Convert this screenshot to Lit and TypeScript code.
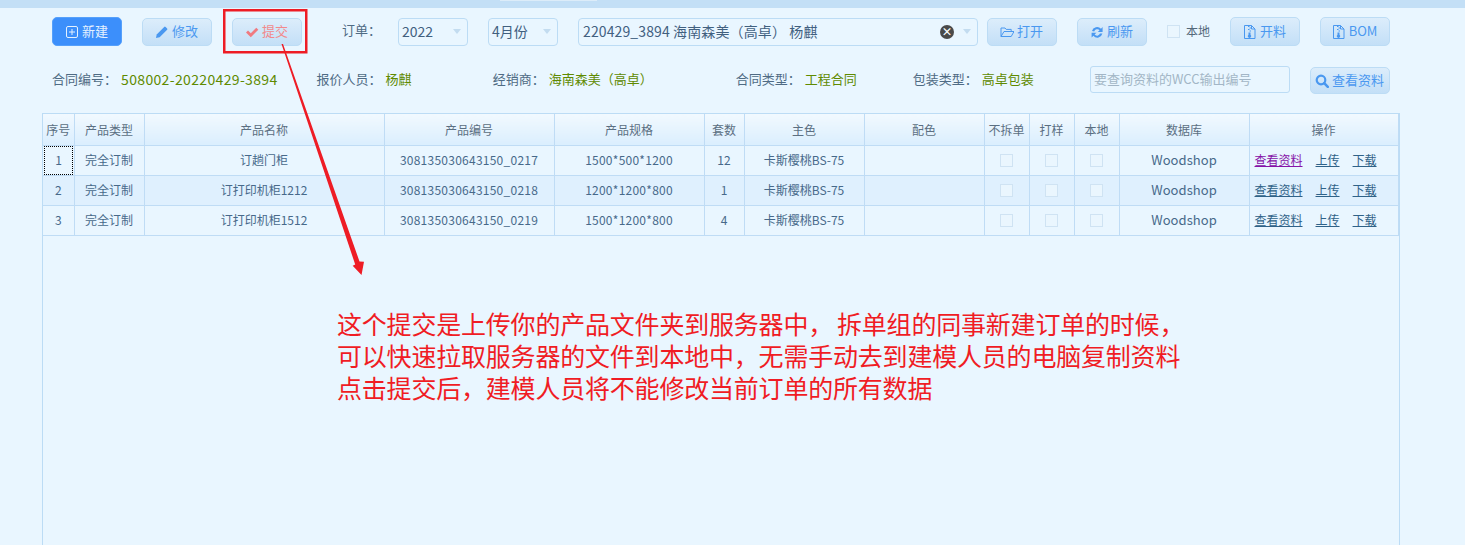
import { LitElement, css, html, svg } from "lit";
import { customElement } from "lit/decorators.js";

const ICONS: Record<string, unknown> = {
  plus: svg`<rect x="1.500" y="1.500" width="11" height="11" rx="1.500" fill="none" stroke="currentColor"/><path d="M7 4v6M4 7h6" stroke="currentColor" fill="none"/>`,
  pencil: svg`<path d="M1 13l.7-3.600L9.200 1.900a1 1 0 0 1 1.400 0l1.500 1.500a1 1 0 0 1 0 1.400L4.600 12.300z" fill="currentColor"/>`,
  check: svg`<path d="M1 7.500l2-2 2.800 2.800L11.300 2.800l2 2-7.500 7.500z" fill="currentColor"/>`,
  folder: svg`<path d="M1 11.500V3h4l1.200 1.400h5V6.500M1 11.500h10.200L14 6.500H4L1 11.500z" fill="none" stroke="currentColor" stroke-linejoin="round"/>`,
  refresh: svg`<path d="M2 6a5.200 5.200 0 0 1 9-2.200L12.600 2v5H7.800l1.800-1.800A3.200 3.200 0 0 0 4.200 6.600zM12.400 8.600a5.200 5.200 0 0 1-9 2.200L1.600 12.600V7.800h4.800L4.600 9.600a3.200 3.200 0 0 0 5.400-1z" fill="currentColor"/>`,
  zip: svg`<path d="M1.500.5h7l3.500 3.500v9.500H1.500z" fill="none" stroke="currentColor"/><path d="M8.500.5V4H12M5 1.500h1.500M6.500 3H8M5 4.500h1.500M6.500 6H8" fill="none" stroke="currentColor"/><path d="M5.500 7.500h2v2.200a1.700 1.700 0 1 1-2 0z" fill="currentColor"/>`,
  search: svg`<circle cx="6" cy="6" r="4.300" fill="none" stroke="currentColor" stroke-width="2.200"/><path d="M9.200 9.200l3.600 3.600" stroke="currentColor" stroke-width="2.600" stroke-linecap="round"/>`,
};

const icon = (name: string) =>
  html`<svg class="icon" viewBox="0 0 14 14" width="14" height="14">${ICONS[name]}</svg>`;

const COLUMNS = ["序号", "产品类型", "产品名称", "产品编号", "产品规格", "套数", "主色", "配色", "不拆单", "打样", "本地", "数据库", "操作"];
const WIDTHS = [31, 70, 240, 170, 150, 40, 120, 120, 45, 45, 45, 130, 149];

const ROWS = [
  { name: "订趟门柜", code: "308135030643150_0217", spec: "1500*500*1200", qty: 12 },
  { name: "订打印机柜1212", code: "308135030643150_0218", spec: "1200*1200*800", qty: 1 },
  { name: "订打印机柜1512", code: "308135030643150_0219", spec: "1500*1200*800", qty: 4 },
];

@customElement("app-root")
export class AppRoot extends LitElement {
  static styles = css`
    :host {
      display: block;
      position: relative;
      height: 545px;
      overflow: hidden;
      background: #e9f6ff;
      color: #47698a;
      font-family: "Noto Sans CJK SC", "Noto Sans", sans-serif;
      font-size: 13px;
    }
    .topbar {
      height: 8px;
      background: #c3dff6;
    }
    .tab {
      width: 97px;
      height: 1px;
      margin-left: 500px;
      background: #dcecf9;
    }
    .toolbar {
      display: flex;
      align-items: center;
      height: 29px;
      margin-top: 9px;
      padding-left: 52px;
    }
    .btn {
      box-sizing: border-box;
      display: flex;
      align-items: center;
      justify-content: center;
      gap: 3px;
      flex: none;
      width: 70px;
      height: 28px;
      padding-bottom: 2px;
      border: 1px solid #bcdcf5;
      border-radius: 5px;
      background: linear-gradient(#dcedfb, #c3dff7);
      color: #4a98f0;
      white-space: nowrap;
    }
    .btn .icon {
      flex: none;
      margin-top: 2px;
      margin-left: -1px;
    }
    .btn.primary {
      height: 29px;
      background: #3c8ffb;
      border-color: #55a0fb;
      color: #e4f1ff;
    }
    .btn.danger {
      color: #f2898c;
    }
    .btn.danger .icon {
      color: #f07a80;
    }
    .btn.tall {
      height: 29px;
    }
    .gap-20 {
      margin-left: 20px;
    }
    .gap-9 {
      margin-left: 9px;
    }
    .order-label {
      margin-left: 40px;
      width: 56px;
      padding-bottom: 4px;
      color: #4f6b84;
    }
    .select {
      box-sizing: border-box;
      display: flex;
      align-items: center;
      height: 28px;
      padding: 0 0 2px 3px;
      border: 1px solid #bcdcf5;
      border-radius: 4px;
      font-size: 14px;
      color: #41607f;
      white-space: pre;
    }
    .select .caret {
      margin: 2px 6px 0 auto;
      border: 4px solid transparent;
      border-top: 5px solid #c3dcf0;
      border-bottom: 0;
    }
    .select.small {
      width: 70px;
    }
    .select.wide {
      width: 400px;
      padding-left: 4px;
      letter-spacing: 0.12px;
    }
    .clear {
      display: flex;
      align-items: center;
      justify-content: center;
      margin: 2px 0 0 auto;
      width: 14px;
      height: 14px;
      border-radius: 50%;
      background: #4a4a4a;
      color: #fff;
      font-size: 11px;
      font-weight: 700;
      line-height: 1;
    }
    .select.wide .caret {
      margin-left: 9px;
    }
    .checkbox {
      box-sizing: border-box;
      display: block;
      width: 13px;
      height: 13px;
      border: 1px solid #cfe3f3;
      background: #eaf6fe;
    }
    .local {
      display: flex;
      align-items: center;
      gap: 6px;
      margin-left: 20px;
      font-size: 12px;
      color: #54687a;
    }
    .local span:last-child {
      padding-bottom: 3px;
    }
    .info {
      display: flex;
      align-items: center;
      height: 28px;
      margin-top: 20px;
      padding-left: 52px;
      white-space: nowrap;
    }
    .info .label,
    .info .value {
      padding-bottom: 3px;
    }
    .info .label {
      color: #4f6b84;
    }
    .info .value {
      color: #5f8a00;
      margin-left: 4px;
    }
    .info .contract {
      font-size: 14px;
      letter-spacing: 0.35px;
    }
    .m40 {
      margin-left: 39px;
    }
    .m81 {
      margin-left: 81px;
    }
    .m83 {
      margin-left: 83px;
    }
    .m56 {
      margin-left: 56px;
    }
    .query {
      box-sizing: border-box;
      display: flex;
      align-items: center;
      align-self: flex-start;
      width: 200px;
      height: 27px;
      margin-left: auto;
      padding: 0 3px 2px;
      border: 1px solid #bcdcf5;
      border-radius: 3px;
      color: #a3b6c6;
    }
    .info .btn {
      align-self: flex-start;
      width: 80px;
      height: 27px;
      margin: 1px 75px 0 20px;
    }
    .table-wrap {
      box-sizing: border-box;
      width: 1358px;
      height: 500px;
      margin: 19px 0 0 42px;
      border: 1px solid #bcdcf5;
    }
    table {
      border-collapse: collapse;
      table-layout: fixed;
      width: 1355px;
      text-align: center;
      font-size: 12px;
    }
    th,
    td {
      padding: 0;
      border: 1px solid #bfdcf5;
      white-space: nowrap;
    }
    td {
      height: 26px;
      padding-bottom: 3px;
    }
    td.flush {
      padding-bottom: 0;
    }
    tr > :first-child {
      border-left: 0;
    }
    thead tr > * {
      border-top: 0;
    }
    th {
      height: 31px;
      font-weight: 400;
      color: #5b6f82;
      background: linear-gradient(#f1f9ff, #daeefe);
    }
    tbody tr:nth-child(even) {
      background: #dff0fe;
    }
    td .checkbox {
      margin: 0 auto;
    }
    .focused {
      box-sizing: border-box;
      display: flex;
      align-items: center;
      justify-content: center;
      width: 29px;
      height: 29px;
      margin-left: 1px;
      padding-bottom: 3px;
      border: 1px dotted #000;
    }
    .num {
      letter-spacing: 0.25px;
    }
    .woodshop {
      font-size: 13px;
      letter-spacing: 0.05px;
    }
    .ops {
      display: flex;
      padding-left: 5px;
      gap: 13px;
    }
    .ops a {
      color: #2f6288;
      text-decoration: underline;
      white-space: nowrap;
    }
    .ops a.visited {
      color: #8613a8;
    }
    .annotation {
      position: absolute;
      inset: 0;
      pointer-events: none;
    }
    .annotation svg {
      position: absolute;
      inset: 0;
    }
    .note {
      position: absolute;
      left: 337px;
      top: 307px;
      color: #f01c24;
      font-size: 25px;
      letter-spacing: -0.2px;
      line-height: 32px;
      white-space: nowrap;
    }
    .note .wide-comma {
      margin-right: 4px;
    }
  `;

  private renderRow(row: (typeof ROWS)[number], index: number) {
    const visited = index === 0;
    return html`<tr>
      ${visited
        ? html`<td class="flush"><div class="focused">1</div></td>`
        : html`<td>${index + 1}</td>`}
      <td>完全订制</td>
      <td>${row.name}</td>
      <td class="num">${row.code}</td>
      <td class="num">${row.spec}</td>
      <td>${row.qty}</td>
      <td>卡斯樱桃BS-75</td>
      <td></td>
      <td class="flush"><span class="checkbox"></span></td>
      <td class="flush"><span class="checkbox"></span></td>
      <td class="flush"><span class="checkbox"></span></td>
      <td class="woodshop">Woodshop</td>
      <td>
        <div class="ops">
          <a class=${visited ? "visited" : ""}>查看资料</a>
          <a>上传</a>
          <a>下载</a>
        </div>
      </td>
    </tr>`;
  }

  render() {
    return html`
      <div class="topbar"><div class="tab"></div></div>
      <div class="toolbar">
        <div class="btn primary">${icon("plus")}新建</div>
        <div class="btn gap-20">${icon("pencil")}修改</div>
        <div class="btn danger gap-20">${icon("check")}提交</div>
        <div class="order-label">订单：</div>
        <div class="select small">2022<span class="caret"></span></div>
        <div class="select small gap-20">4月份<span class="caret"></span></div>
        <div class="select wide gap-20">220429_3894 海南森美（高卓） 杨麒<span class="clear">×</span><span class="caret"></span></div>
        <div class="btn gap-9">${icon("folder")}打开</div>
        <div class="btn gap-20">${icon("refresh")}刷新</div>
        <label class="local"><span class="checkbox"></span><span>本地</span></label>
        <div class="btn tall gap-20">${icon("zip")}开料</div>
        <div class="btn tall gap-20">${icon("zip")}BOM</div>
      </div>
      <div class="info">
        <span class="label">合同编号：</span><span class="value contract">508002-20220429-3894</span>
        <span class="label m40">报价人员：</span><span class="value">杨麒</span>
        <span class="label m81">经销商：</span><span class="value">海南森美（高卓）</span>
        <span class="label m83">合同类型：</span><span class="value">工程合同</span>
        <span class="label m56">包装类型：</span><span class="value">高卓包装</span>
        <div class="query">要查询资料的WCC输出编号</div>
        <div class="btn">${icon("search")}查看资料</div>
      </div>
      <div class="table-wrap">
        <table>
          <colgroup>${WIDTHS.map((w) => html`<col style="width:${w}px" />`)}</colgroup>
          <thead>
            <tr>${COLUMNS.map((c) => html`<th>${c}</th>`)}</tr>
          </thead>
          <tbody>${ROWS.map((r, i) => this.renderRow(r, i))}</tbody>
        </table>
      </div>
      <div class="annotation">
        <svg width="1465" height="545" viewBox="0 0 1465 545">
          <rect x="224.250" y="10.250" width="82" height="42" fill="none" stroke="#ee1c25" stroke-width="2.500" />
          <path d="M281.500 44L283 44L359.500 261.500L364 261.700L361.500 275L352.700 265.700L355.200 264.500Z" fill="#ee1c25" />
        </svg>
        <div class="note">
          这个提交是上传你的产品文件夹到服务器中<span class="wide-comma">，</span>拆单组的同事新建订单的时候，<br />
          可以快速拉取服务器的文件到本地中，无需手动去到建模人员的电脑复制资料<br />
          点击提交后，建模人员将不能修改当前订单的所有数据
        </div>
      </div>
    `;
  }
}
